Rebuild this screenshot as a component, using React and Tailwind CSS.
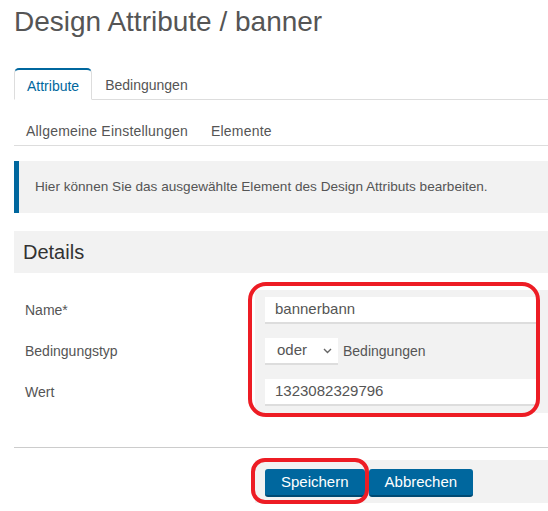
export default function App() {
  const rows = [
    { label: "Name*", kind: "input", value: "bannerbann" },
    { label: "Bedingungstyp", kind: "select", value: "oder" },
    { label: "Wert", kind: "input", value: "1323082329796" },
  ];

  return (
    <div className="relative w-[548px] h-[511px] overflow-hidden bg-white font-['Liberation_Sans',Arial,sans-serif] text-[#555]">
      <div className="pl-[14px]">
        <h1 className="mt-[6px] text-[28px] leading-[32px] text-[#555]">Design Attribute / banner</h1>

        {/* tabs */}
        <div className="mt-[30px] flex border-b border-[#ddd] text-[14px]">
          <div className="-mb-px h-[32px] px-[12px] border border-b-white border-[#ddd] border-t-2 border-t-[#00679e] rounded-t-[5px] bg-white text-[#00679e] leading-[32px]">
            Attribute
          </div>
          <div className="h-[31px] px-[12px] border border-transparent leading-[32px]">Bedingungen</div>
        </div>

        {/* sub nav */}
        <div className="mt-[16px] flex h-[30px] border-b border-[#ddd] text-[14px] tracking-[0.2px]">
          <div className="px-[12px] leading-[31px]">Allgemeine Einstellungen</div>
          <div className="px-[11px] leading-[31px]">Elemente</div>
        </div>

        {/* info box */}
        <div className="mt-[15px] h-[52px] flex items-center bg-[#f2f2f2] border-l-[5px] border-[#00679e] pl-[16px] text-[13.6px]">
          Hier können Sie das ausgewählte Element des Design Attributs bearbeiten.
        </div>

        {/* details header */}
        <div className="mt-[18px] h-[42px] flex items-center bg-[#f2f2f2] pl-[9px] text-[20px] text-[#333]">
          Details
        </div>

        {/* form */}
        <div className="mt-[17px]">
          {rows.map((r) => (
            <div key={r.label} className="flex h-[41px]">
              <div className="w-[241px] pl-[11px] flex items-center text-[14px]">{r.label}</div>
              <div className="flex-1 bg-[#f2f2f2] px-[10px] flex items-center">
                {r.kind === "input" ? (
                  <div className="w-full h-[27px] bg-white border-b-2 border-[#ddd] pl-[10px] flex items-center text-[15px] text-[#555]">
                    {r.value}
                  </div>
                ) : (
                  <div className="flex items-center gap-[5px]">
                    <div className="w-[73px] h-[27px] bg-white border-b-2 border-[#ddd] pl-[12px] pr-[6px] flex items-center justify-between text-[15px]">
                      <span>{r.value}</span>
                      <svg width="9" height="6" viewBox="0 0 9 6" fill="none" stroke="#666" strokeWidth="1.4">
                        <path d="M1 1l3.5 3.5L8 1" />
                      </svg>
                    </div>
                    <span className="text-[14px]">Bedingungen</span>
                  </div>
                )}
              </div>
            </div>
          ))}
        </div>

        <div className="mt-[34px] border-t border-[#ccc]" />

        {/* buttons */}
        <div className="mt-[12px] ml-[241px] h-[43px] bg-[#f2f2f2] pl-[10px] flex items-center gap-[4px]">
          <button className="mt-[2px] h-[28px] px-[16px] bg-[#00679e] border-b-2 border-[#004a73] rounded-[3px] text-white text-[15px] leading-none">
            Speichern
          </button>
          <button className="mt-[2px] h-[28px] px-[16px] bg-[#00679e] border-b-2 border-[#004a73] rounded-[3px] text-white text-[15px] leading-none">
            Abbrechen
          </button>
        </div>
      </div>

      {/* red annotation marks */}
      <div className="absolute left-[248px] top-[282px] w-[292px] h-[135px] border-4 border-[#ed1c24] rounded-[18px]" />
      <div className="absolute left-[251px] top-[458px] w-[118px] h-[46px] border-4 border-[#ed1c24] rounded-[14px]" />
    </div>
  );
}
